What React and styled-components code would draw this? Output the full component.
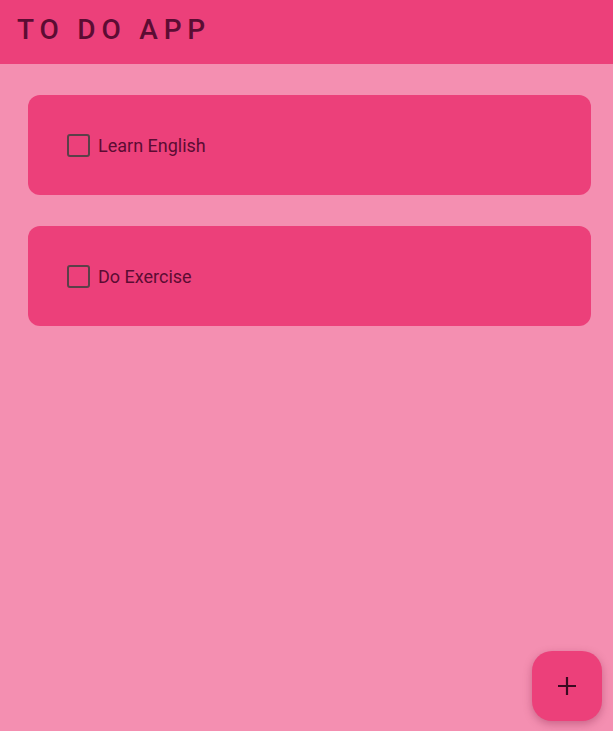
import React, { useState } from 'react';
import styled, { createGlobalStyle } from 'styled-components';

const GlobalStyle = createGlobalStyle`
  html, body {
    margin: 0;
    padding: 0;
    background: #f48fb1;
    font-family: Roboto, "Liberation Sans", sans-serif;
  }
`;

const initialTodos = [
  { id: 1, title: 'Learn English', done: false },
  { id: 2, title: 'Do Exercise', done: false },
];

const App = () => {
  const [todos, setTodos] = useState(initialTodos);

  const toggle = (id) => {
    setTodos(todos.map((t) => (t.id === id ? { ...t, done: !t.done } : t)));
  };

  return (
    <Page>
      <GlobalStyle />
      <Header>
        <Title>TO DO APP</Title>
      </Header>
      <List>
        {todos.map((todo) => (
          <Card key={todo.id}>
            <Label>
              <Checkbox
                type="checkbox"
                checked={todo.done}
                onChange={() => toggle(todo.id)}
              />
              <TodoText done={todo.done}>{todo.title}</TodoText>
            </Label>
          </Card>
        ))}
      </List>
      <Fab aria-label="add">
        <svg width="20" height="20" viewBox="0 0 20 20">
          <path d="M10 1v18M1 10h18" stroke="#3a0a20" strokeWidth="2.2" fill="none" />
        </svg>
      </Fab>
    </Page>
  );
};

const Page = styled.div`
  min-height: 731px;
  position: relative;
  background: #f48fb1;
`;

const Header = styled.header`
  height: 64px;
  background: #ec407a;
  display: flex;
  align-items: center;
  padding: 0 17px;
  box-sizing: border-box;
`;

const Title = styled.h1`
  margin: 0 0 6px;
  font-size: 28px;
  font-weight: 500;
  letter-spacing: 5.8px;
  color: #5c0c33;
`;

const List = styled.main`
  display: flex;
  flex-direction: column;
  gap: 31px;
  padding: 31px 22px 0 28px;
`;

const Card = styled.div`
  height: 100px;
  background: #ec407a;
  border-radius: 12px;
  display: flex;
  align-items: center;
  padding: 0 39px;
`;

const Label = styled.label`
  display: flex;
  align-items: center;
  gap: 8px;
  cursor: pointer;
`;

const Checkbox = styled.input`
  appearance: none;
  margin: 0;
  width: 23px;
  height: 23px;
  border: 2.5px solid #5b4048;
  border-radius: 3px;
  box-sizing: border-box;
  cursor: pointer;

  &:checked {
    background: #5b4048;
  }
`;

const TodoText = styled.span`
  font-size: 18px;
  color: #5c0c33;
  text-decoration: ${(p) => (p.done ? 'line-through' : 'none')};
`;

const Fab = styled.button`
  position: absolute;
  right: 11px;
  bottom: 10px;
  width: 70px;
  height: 70px;
  border: none;
  border-radius: 20px;
  background: #ec407a;
  box-shadow: 0 3px 8px rgba(120, 20, 60, 0.35);
  display: flex;
  align-items: center;
  justify-content: center;
  cursor: pointer;
`;

export default App;
